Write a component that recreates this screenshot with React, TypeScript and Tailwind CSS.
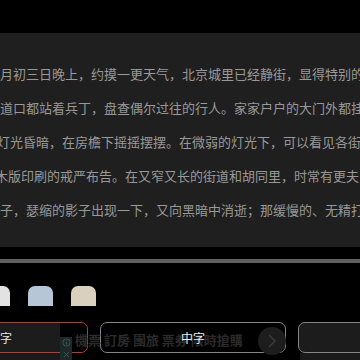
import React from 'react';

const cjk = { fontFamily: '"Noto Sans CJK SC", "Noto Sans", sans-serif' };
const cjkTc = { fontFamily: '"Noto Sans CJK TC", "Noto Sans", sans-serif' };

// lines of the reading page, each one scrolled a bit to the left
const lines = [
  { text: '九月初三日晚上，约摸一更天气，北京城里已经静街，显得特别的冷', shift: 'ml-[-13px]' },
  { text: '街道口都站着兵丁，盘查偶尔过往的行人。家家户户的大门外都挂着', shift: 'ml-[-13px]' },
  { text: '灯光昏暗，在房檐下摇摇摆摆。在微弱的灯光下，可以看见各街', shift: 'ml-[-3px]' },
  { text: '木版印刷的戒严布告。在又窄又长的街道和胡同里，时常有更夫', shift: 'ml-[-5px]' },
  { text: '子，瑟缩的影子出现一下，又向黑暗中消逝；那缓慢的、无精打采', shift: 'ml-0' },
];

const swatches = ['bg-[#e2e2e2] ml-[-15px]', 'bg-[#b6c6d6]', 'bg-[#d9d1be]'];

export default function App() {
  return (
    <div className="relative w-[360px] h-[360px] overflow-hidden bg-black" style={cjk}>
      <div className="h-[33px] bg-black" />

      {/* reading panel */}
      <div className="h-[214px] bg-[#1f1f1f] pt-[24px] overflow-hidden">
        {lines.map((l, i) => (
          <div
            key={i}
            className={`${l.shift} h-[34px] leading-[34px] text-[13px] text-[#999999] whitespace-nowrap`}
          >
            {l.text}
          </div>
        ))}
      </div>

      {/* progress track */}
      <div className="mt-[12px] h-[4px] bg-[#5f5f5f]" />

      {/* background colours */}
      <div className="mt-[23px] flex gap-[18px]">
        {swatches.map((s, i) => (
          <div key={i} className={`${s} w-[25px] h-[20px] shrink-0 rounded-t-[7px]`} />
        ))}
      </div>

      {/* font size buttons */}
      <div className="mt-[16px] flex gap-[12px]">
        <div className="relative ml-[-88px] w-[176px] h-[31px] shrink-0 rounded-[7px] border border-[#c9342d] bg-[#1c1c1c] flex items-center justify-center">
          <div className="absolute left-[147px] right-0 top-0 bottom-0 bg-black rounded-r-[6px]" />
          <span className="relative z-10 text-[12px] text-[#e6e6e6]">大字</span>
        </div>
        <div className="relative w-[186px] h-[31px] shrink-0 rounded-[7px] border border-[#858585] bg-black flex items-center justify-center">
          <span className="relative z-20 text-[12px] text-[#ededed]">中字</span>
        </div>
        <div className="w-[186px] h-[31px] shrink-0 rounded-[7px] border border-[#858585] bg-[#1c1c1c] flex items-center justify-center">
          <span className="text-[12px] text-[#e6e6e6]">小字</span>
        </div>
      </div>

      <div className="flex h-[7px]">
        <div className="w-[60px] bg-[#1a1a1a]" />
        <div className="w-[240px] bg-black" />
        <div className="flex-1 bg-[#1a1a1a]" />
      </div>

      {/* faded ad banner on top */}
      <div
        className="absolute left-[75px] top-[332px] z-10 text-[13px] font-bold text-[#2b2b2b] whitespace-nowrap leading-[16px] pointer-events-none"
        style={cjkTc}
      >
        機票 訂房 團旅 票券 限時搶購
      </div>
      <div className="absolute left-[258px] top-[327px] z-10 w-[28px] h-[28px] rounded-full bg-[#1d1d1d] flex items-center justify-center">
        <svg width="10" height="14" viewBox="0 0 10 14" fill="none">
          <path d="M2 1l6 6-6 6" stroke="#3d3d3d" strokeWidth="1.4" />
        </svg>
      </div>
      <div className="absolute left-[60px] top-[337px] z-10 w-[12px] h-[23px] bg-[#1d2828] flex flex-col items-center pt-[1px] gap-[4px]">
        <svg width="9" height="9" viewBox="0 0 10 10" fill="none">
          <circle cx="5" cy="5" r="4" stroke="#3e5a5a" strokeWidth="1" />
          <path d="M5 4.2v3.2M5 2.6v0.8" stroke="#3e5a5a" strokeWidth="1" />
        </svg>
        <svg width="7" height="7" viewBox="0 0 8 8" fill="none">
          <path d="M1 1l6 6M7 1l-6 6" stroke="#3e5a5a" strokeWidth="1" />
        </svg>
      </div>
    </div>
  );
}
